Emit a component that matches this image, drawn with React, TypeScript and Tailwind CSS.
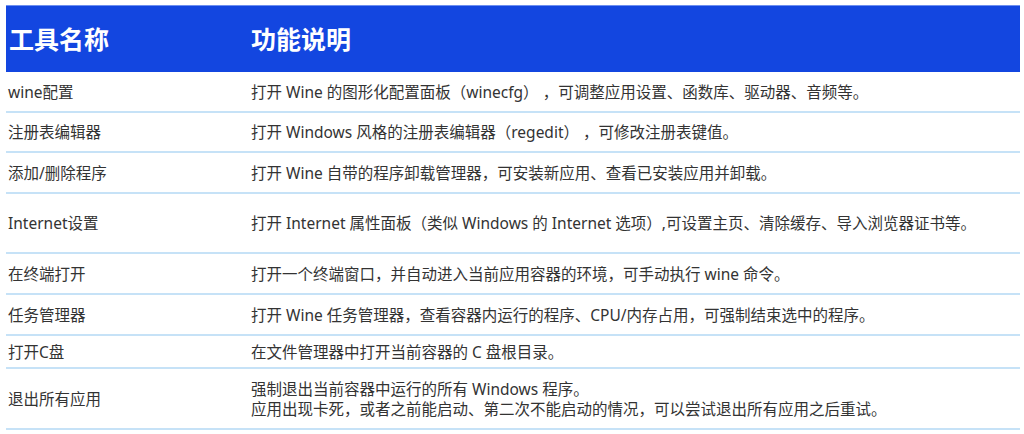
import React from "react";

const rows: { name: string; desc: string[]; h: string }[] = [
  { name: "wine配置", desc: ["打开 Wine 的图形化配置面板（winecfg） ，可调整应用设置、函数库、驱动器、音频等。"], h: "h-[41px]" },
  { name: "注册表编辑器", desc: ["打开 Windows 风格的注册表编辑器（regedit） ，可修改注册表键值。"], h: "h-[40px]" },
  { name: "添加/删除程序", desc: ["打开 Wine 自带的程序卸载管理器，可安装新应用、查看已安装应用并卸载。"], h: "h-[41px]" },
  { name: "Internet设置", desc: ["打开 Internet 属性面板（类似 Windows 的 Internet 选项）,可设置主页、清除缓存、导入浏览器证书等。"], h: "h-[60px]" },
  { name: "在终端打开", desc: ["打开一个终端窗口，并自动进入当前应用容器的环境，可手动执行 wine 命令。"], h: "h-[41px]" },
  { name: "任务管理器", desc: ["打开 Wine 任务管理器，查看容器内运行的程序、CPU/内存占用，可强制结束选中的程序。"], h: "h-[41px]" },
  { name: "打开C盘", desc: ["在文件管理器中打开当前容器的 C 盘根目录。"], h: "h-[33px]" },
  { name: "退出所有应用", desc: ["强制退出当前容器中运行的所有 Windows 程序。", "应用出现卡死，或者之前能启动、第二次不能启动的情况，可以尝试退出所有应用之后重试。"], h: "h-[61px]" },
];

export default function App() {
  return (
    <div className="w-[1024px] h-[434px] bg-white overflow-hidden pt-[5px] pl-[6px] font-['Noto_Sans','Noto_Sans_CJK_SC',sans-serif] text-[#333333]">
      <div className="w-[1014px]">
        <div className="h-[67px] bg-[#1346e0] border-t border-[#6d8fef] flex items-center text-white font-bold text-[25px] pt-[1px]">
          <div className="w-[245px] pl-[3px]">工具名称</div>
          <div className="flex-1">功能说明</div>
        </div>
        {rows.map((r) => (
          <div key={r.name} className={`${r.h} border-b-2 border-[#c6e2f7] flex items-center text-[15.5px]`}>
            <div className="w-[245px] pl-[2px] leading-[20px]">{r.name}</div>
            <div className="flex-1 flex flex-col">
              {r.desc.map((d) => (
                <div key={d} className="leading-[20px]">{d}</div>
              ))}
            </div>
          </div>
        ))}
      </div>
    </div>
  );
}
